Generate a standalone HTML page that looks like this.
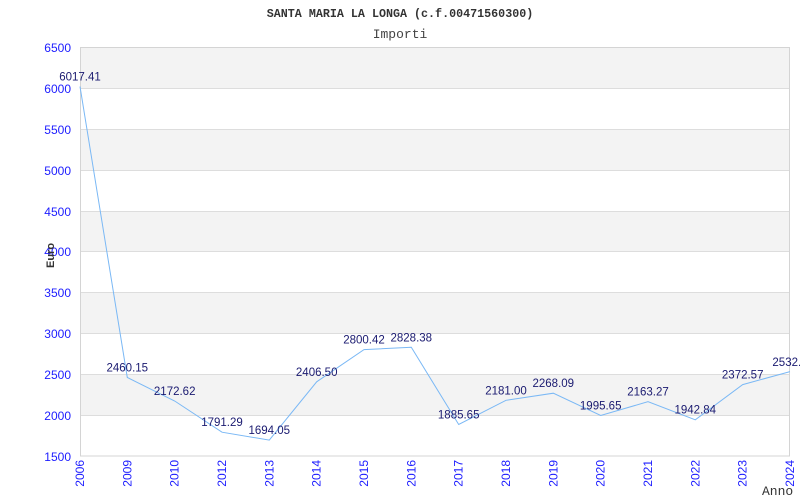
<!DOCTYPE html>
<html><head><meta charset="utf-8"><style>
body{margin:0;background:#fff;width:800px;height:500px;overflow:hidden}
svg{display:block}
.v{font:11.5px "Liberation Sans",sans-serif;fill:#1a1a70;text-anchor:middle}
.ax{font:12px "Liberation Sans",sans-serif;fill:#1c1cff}
</style></head><body>
<svg width="800" height="500" viewBox="0 0 800 500">
<text x="400" y="17" font-family="Liberation Mono" font-weight="bold" font-size="11.7" fill="#333" text-anchor="middle">SANTA MARIA LA LONGA (c.f.00471560300)</text>
<text x="400" y="38" font-family="Liberation Mono" font-size="13" fill="#444" text-anchor="middle">Importi</text>
<rect x="80" y="47" width="710" height="409" fill="#fff"/>
<g fill="#f3f3f3">
<rect x="80" y="47" width="710" height="41"/>
<rect x="80" y="129" width="710" height="41"/>
<rect x="80" y="211" width="710" height="41"/>
<rect x="80" y="292" width="710" height="41"/>
<rect x="80" y="374" width="710" height="41"/>
</g>
<g stroke="#ddd" stroke-width="1">
<line x1="80" y1="88.5" x2="790" y2="88.5"/><line x1="80" y1="129.5" x2="790" y2="129.5"/>
<line x1="80" y1="170.5" x2="790" y2="170.5"/><line x1="80" y1="211.5" x2="790" y2="211.5"/>
<line x1="80" y1="251.5" x2="790" y2="251.5"/><line x1="80" y1="292.5" x2="790" y2="292.5"/>
<line x1="80" y1="333.5" x2="790" y2="333.5"/><line x1="80" y1="374.5" x2="790" y2="374.5"/>
<line x1="80" y1="415.5" x2="790" y2="415.5"/>
</g>
<rect x="80.5" y="47.5" width="709" height="408.5" fill="none" stroke="#d4d4d4"/>
<polyline fill="none" stroke="#7ab8f5" stroke-width="1" points="80,86.5 127.3,377.5 174.7,401 222,432.2 269.3,440.1 316.7,381.8 364,349.6 411.3,347.3 458.7,424.5 506,400.3 553.3,393.2 600.7,415.5 648,401.7 695.3,419.8 742.7,384.6 790,371.6"/>
<g class="v">
<text x="80" y="80.5">6017.41</text><text x="127.3" y="371.5">2460.15</text><text x="174.7" y="395">2172.62</text>
<text x="222" y="426">1791.29</text><text x="269.3" y="434">1694.05</text><text x="316.7" y="376">2406.50</text>
<text x="364" y="343.5">2800.42</text><text x="411.3" y="341.5">2828.38</text><text x="458.7" y="418.5">1885.65</text>
<text x="506" y="394.5">2181.00</text><text x="553.3" y="387">2268.09</text><text x="600.7" y="409.5">1995.65</text>
<text x="648" y="395.5">2163.27</text><text x="695.3" y="413.5">1942.84</text><text x="742.7" y="378.5">2372.57</text>
<text x="790" y="366">2532.2</text>
</g>
<g class="ax" text-anchor="end">
<text x="71" y="52">6500</text><text x="71" y="93">6000</text><text x="71" y="134">5500</text>
<text x="71" y="175">5000</text><text x="71" y="216">4500</text><text x="71" y="256">4000</text>
<text x="71" y="297">3500</text><text x="71" y="338">3000</text><text x="71" y="379">2500</text>
<text x="71" y="420">2000</text><text x="71" y="461">1500</text>
</g>
<g class="ax" text-anchor="end">
<text transform="translate(84,460) rotate(-90)">2006</text>
<text transform="translate(131.3,460) rotate(-90)">2009</text>
<text transform="translate(178.7,460) rotate(-90)">2010</text>
<text transform="translate(226,460) rotate(-90)">2012</text>
<text transform="translate(273.3,460) rotate(-90)">2013</text>
<text transform="translate(320.7,460) rotate(-90)">2014</text>
<text transform="translate(368,460) rotate(-90)">2015</text>
<text transform="translate(415.3,460) rotate(-90)">2016</text>
<text transform="translate(462.7,460) rotate(-90)">2017</text>
<text transform="translate(510,460) rotate(-90)">2018</text>
<text transform="translate(557.3,460) rotate(-90)">2019</text>
<text transform="translate(604.7,460) rotate(-90)">2020</text>
<text transform="translate(652,460) rotate(-90)">2021</text>
<text transform="translate(699.3,460) rotate(-90)">2022</text>
<text transform="translate(746.7,460) rotate(-90)">2023</text>
<text transform="translate(794,460) rotate(-90)">2024</text>
</g>
<text transform="translate(54,268) rotate(-90)" font-family="Liberation Sans" font-weight="bold" font-size="11" fill="#333">Euro</text>
<text x="762" y="495" font-family="Liberation Mono" font-size="13" fill="#333">Anno</text>
</svg>
</body></html>
